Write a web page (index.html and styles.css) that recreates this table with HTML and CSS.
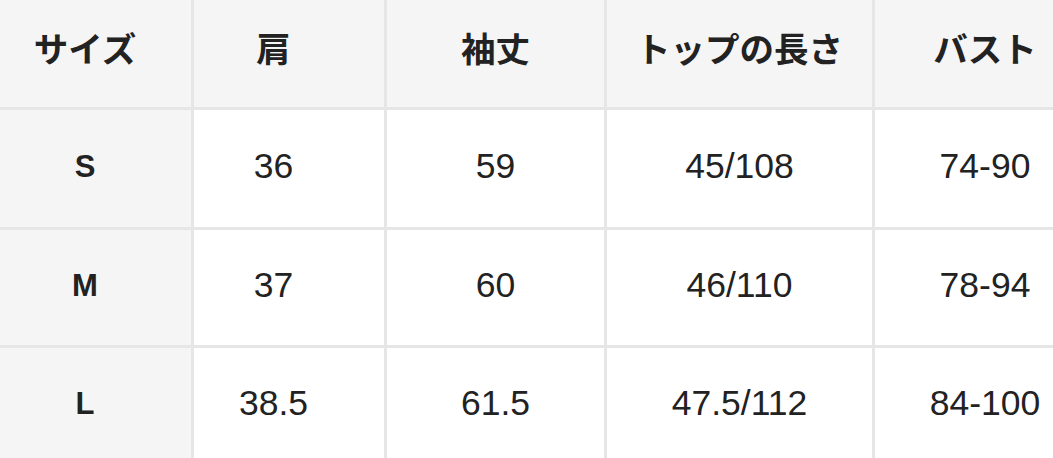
FILE: index.html
```html
<!DOCTYPE html>
<html lang="ja">
<head>
<meta charset="utf-8">
<link rel="stylesheet" href="styles.css">
</head>
<body>
<div class="size-table">
  <div class="cell head c1">サイズ</div>
  <div class="cell head c2">肩</div>
  <div class="cell head">袖丈</div>
  <div class="cell head">トップの長さ</div>
  <div class="cell head">バスト</div>

  <div class="cell label c1">S</div>
  <div class="cell c2">36</div>
  <div class="cell">59</div>
  <div class="cell">45/108</div>
  <div class="cell">74-90</div>

  <div class="cell label c1">M</div>
  <div class="cell c2">37</div>
  <div class="cell">60</div>
  <div class="cell">46/110</div>
  <div class="cell">78-94</div>

  <div class="cell label c1">L</div>
  <div class="cell c2">38.5</div>
  <div class="cell">61.5</div>
  <div class="cell">47.5/112</div>
  <div class="cell">84-100</div>
</div>
</body>
</html>
```

FILE: styles.css
```css
html, body {
  margin: 0;
  padding: 0;
  background: #ffffff;
  overflow: hidden;
}

.size-table {
  display: grid;
  grid-template-columns: 191px 190px 217px 265px 220px;
  grid-template-rows: 107px 117px 115px 115px;
  gap: 3px;
  background: #e6e6e6;
  width: max-content;
  font-family: "Liberation Sans", Arial, "Noto Sans CJK JP", sans-serif;
  font-size: 35.5px;
  color: #222222;
}

.cell {
  background: #ffffff;
  display: flex;
  align-items: center;
  justify-content: center;
  padding-bottom: 4px;
  box-sizing: border-box;
}

.head {
  background: #f5f5f5;
  font-family: "Noto Sans CJK JP", sans-serif;
  font-weight: 700;
  font-size: 34.5px;
  padding-bottom: 14px;
}

.label {
  background: #f5f5f5;
  font-weight: 700;
  font-size: 31px;
}

.c1 {
  padding-right: 21px;
}

.c2 {
  padding-right: 31px;
}
```
